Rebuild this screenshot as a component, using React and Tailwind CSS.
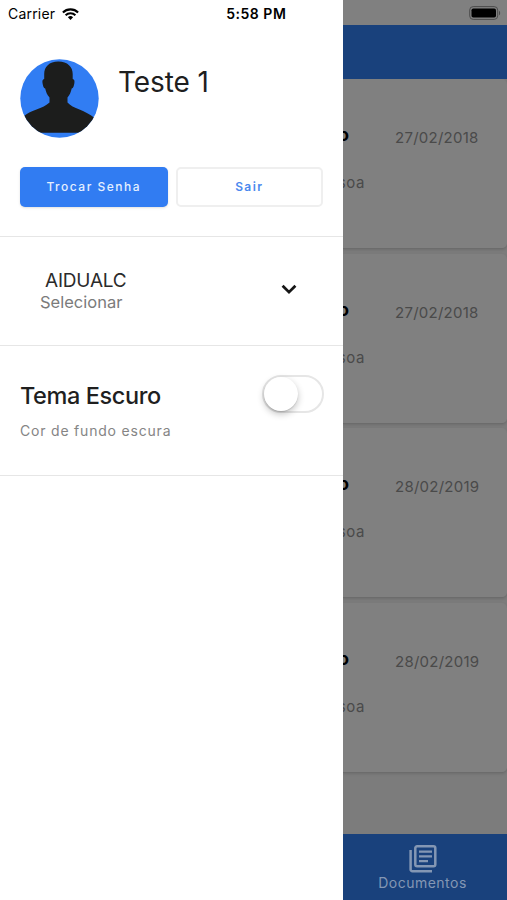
import { useState } from "react";

const cards = [
  { id: 1, date: "27/02/2018" },
  { id: 2, date: "27/02/2018" },
  { id: 3, date: "28/02/2019" },
  { id: 4, date: "28/02/2019" },
];

function WifiIcon() {
  return (
    <svg className="w-[17px] h-[12px]" viewBox="0 0 17 12" fill="none" stroke="#000" strokeWidth={2.1}>
      <path d="M0.9 4.5a10.8 10.8 0 0 1 15.2 0" />
      <path d="M3.6 7.2a7 7 0 0 1 9.8 0" />
      <path d="M8.5 11.9 5.9 9.3a3.7 3.7 0 0 1 5.2 0Z" fill="#000" stroke="none" />
    </svg>
  );
}

function Avatar() {
  return (
    <svg className="w-[79px] h-[79px] shrink-0" viewBox="0 0 79 79">
      <clipPath id="avatar-clip"><circle cx="39.5" cy="39.5" r="39.2" /></clipPath>
      <g clipPath="url(#avatar-clip)">
        <rect width="79" height="79" fill="#317df3" />
        <path fill="#1c1d1c" d="M38.300 2.500C29 2.500 24.200 8 24.200 15v5c-1.700.3-2 2-1.700 4 .5 3 1 5.200 2.700 5.500.8 3.700 2 6.500 4.300 9v5c-3 3-8 5-13 7C11 52.200 7 54.500 4 57L0 73.700h79L74 58.500c-4-3.500-9-5.500-14.500-8-5-2-9.500-4-12-7v-5c2.200-2.500 3.400-5.500 4.200-9 1.700-.3 2.200-2.500 2.700-5.500.3-2 0-3.700-1.700-4v-5c0-7-5-12.500-14.400-12.500Z" />
      </g>
    </svg>
  );
}

function StatusBar() {
  return (
    <div className="flex items-center h-[27px] pl-2 text-black">
      <span className="text-[14px] tracking-[0.2px] mr-[7px]">Carrier</span>
      <WifiIcon />
      <span className="ml-[147px] text-[14px] font-semibold tracking-[0.5px]">5:58 PM</span>
    </div>
  );
}

function Drawer() {
  const [dark, setDark] = useState(false);

  return (
    <aside className="w-[343px] shrink-0 h-full bg-white flex flex-col text-[#1f1f1f]">
      <StatusBar />
      <section className="h-[210px] border-b border-[#e6e6e6] px-5 pt-[32px]">
        <div className="flex">
          <Avatar />
          <h1 className="ml-[19px] mt-[5px] text-[28px] leading-9 tracking-[-0.1px]">Teste 1</h1>
        </div>
        <div className="flex gap-2 mt-[29px]">
          <button type="button" className="w-[148px] h-[40px] rounded-[5px] bg-[#317cf2] text-[#e4efff] text-[12px] font-medium tracking-[1.5px] shadow-sm">
            Trocar Senha
          </button>
          <button type="button" className="w-[148px] h-[40px] rounded-[5px] border-2 border-[#efefef] text-[#4a89ee] text-[12px] font-semibold tracking-[1.4px]">
            Sair
          </button>
        </div>
      </section>

      <section className="h-[109px] border-b border-[#e6e6e6] flex justify-between pl-10 pr-[40px]">
        <div className="pt-[32px]">
          <p className="pl-[5px] text-[19px] leading-[24px] tracking-[-0.2px] text-[#2b2b2b]">AIDUALC</p>
          <p className="text-[16.5px] leading-[19px] text-[#7b7b7b]">Selecionar</p>
        </div>
        <svg className="w-[28px] h-[28px] mt-[38px]" viewBox="0 0 24 24" fill="none" stroke="#161616" strokeWidth={2.400}>
          <path d="m6.500 9.300 5.500 5.400 5.500-5.400" />
        </svg>
      </section>

      <section className="h-[130px] border-b border-[#e6e6e6] flex justify-between pl-5 pr-[19px]">
        <div className="pt-[35px]">
          <h2 className="text-[23.5px] leading-[30px] font-medium tracking-[-0.4px]">Tema Escuro</h2>
          <p className="mt-[10px] text-[14px] leading-[20px] tracking-[0.8px] text-[#858585]">Cor de fundo escura</p>
        </div>
        <button type="button" role="switch" aria-checked={dark} onClick={() => setDark(!dark)}
          className={`mt-[29px] w-[62px] h-[38px] p-[2px] rounded-full border-2 border-[#e6e6e6] flex items-center ${dark ? "justify-end bg-[#317cf2]" : "bg-white"}`}>
          <span className="w-[34px] h-[34px] -ml-[2px] rounded-full bg-white shadow-[0_3px_7px_rgba(0,0,0,0.24),0_1px_1px_rgba(0,0,0,0.12)]" />
        </button>
      </section>
    </aside>
  );
}

function Card({ date }) {
  return (
    <article className="h-[170px] mb-[4.500px] shrink-0 rounded-r-[5px] bg-[#808080] border-b border-[#6c6c6c] shadow-[0_1px_3px_rgba(0,0,0,0.12)]">
      <div className="flex items-start pt-[44px] h-[92px]">
        <div className="w-[6px] flex justify-end overflow-hidden">
          <span className="text-[18px] leading-6 font-bold text-black">o</span>
        </div>
        <span className="ml-[46px] mt-[3px] text-[15px] leading-6 tracking-[0.25px] text-[#4a4a4a]">{date}</span>
      </div>
      <div className="w-[22px] flex justify-end overflow-hidden">
        <span className="text-[15px] leading-6 tracking-[0.6px] text-[#4a4a4a]">Pessoa</span>
      </div>
    </article>
  );
}

function Page() {
  return (
    <main className="flex-1 min-w-0 h-full flex flex-col bg-[#7c7c7c]">
      <div className="h-[25px] shrink-0 bg-[#808080] flex justify-end pt-[6px] pr-[6px]">
        <svg className="w-[32px] h-[14px]" viewBox="0 0 32 14">
          <rect x="0.700" y="0.600" width="28" height="12.800" rx="3.500" fill="none" stroke="#4c4c4c" />
          <rect x="2.500" y="2.400" width="24.500" height="9.200" rx="1.800" fill="#000" />
          <path d="M30 4.700c1.500.6 1.500 4 0 4.600Z" fill="#4c4c4c" />
        </svg>
      </div>
      <header className="h-[54px] shrink-0 bg-[#19417c]" />
      <div className="flex-1 min-h-0 flex flex-col overflow-hidden">
        {cards.map((card) => <Card key={card.id} date={card.date} />)}
      </div>
      <nav className="h-[66px] shrink-0 bg-[#19417c] flex flex-col items-center pt-[9px] pr-[5px] text-[#8497b4]">
        <svg className="w-[32px] h-[32px]" viewBox="0 0 32 32" fill="none" stroke="currentColor" strokeWidth={2.500}>
          <rect x="8.300" y="3.300" width="20" height="20" rx="1.800" />
          <path d="M3.600 7v19.400a1.800 1.800 0 0 0 1.800 1.800H25" />
          <path strokeWidth={2.200} d="M12 8.700h13M12 13.400h13M12 18.100h9" />
        </svg>
        <span className="text-[14px] leading-4 tracking-[0.5px]">Documentos</span>
      </nav>
    </main>
  );
}

export default function App() {
  return (
    <div className="w-[507px] h-[900px] flex overflow-hidden font-['Inter','Liberation_Sans',sans-serif]">
      <Drawer />
      <Page />
    </div>
  );
}
